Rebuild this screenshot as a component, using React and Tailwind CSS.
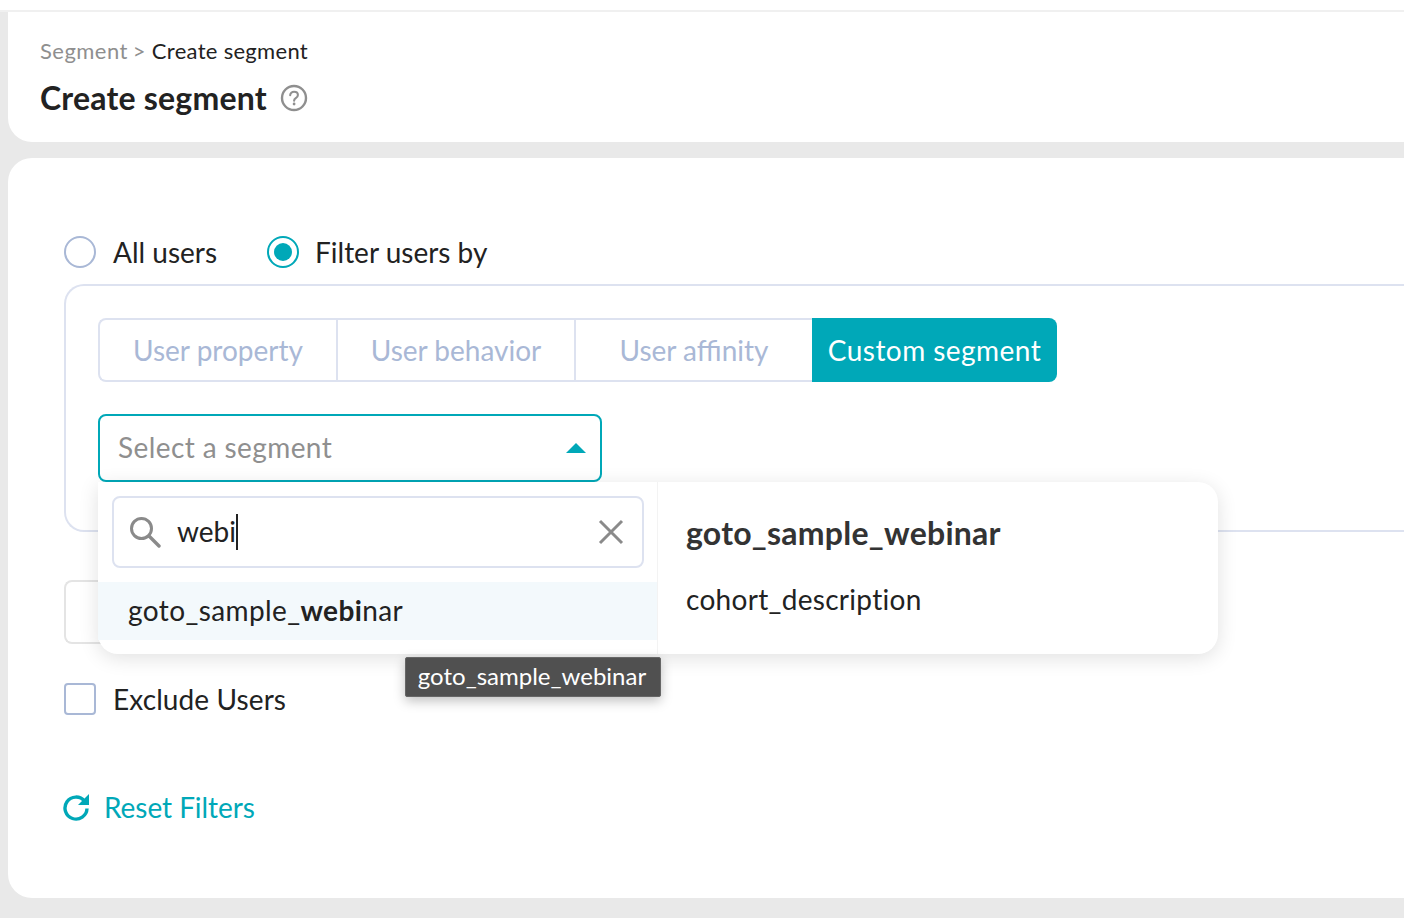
import React from "react";

function Tab({ children, className }) {
  return (
    <div className={`h-full flex items-center justify-center pb-[1px] text-[28px] text-[#a9b8d6] ${className}`}>
      {children}
    </div>
  );
}

export default function App() {
  return (
    <div className="relative h-[918px] w-[1404px] overflow-hidden bg-[#e9e9e9] font-['Lato',sans-serif] text-[#222]">
      <div className="h-[10px] bg-white" />
      <div className="h-[2px] bg-[#f0f0f0]" />
      <div className="pl-2">
        <div className="h-[130px] rounded-bl-[24px] bg-white pl-8 pt-[24px]">
          <div className="flex items-center h-[28px] text-[22px] tracking-[0.3px]">
            <span className="text-[#8f8f8f] tracking-[0.45px]">Segment</span>
            <span className="ml-[5px] text-[#8f8f8f]">&gt;</span>
            <span className="ml-[6px] text-[#222]">Create segment</span>
          </div>
          <div className="mt-[16px] flex items-center h-[36px]">
            <h1 className="text-[32px] font-bold tracking-[0.2px] text-[#222]">Create segment</h1>
            <svg className="ml-[13px]" width="28" height="28" viewBox="0 0 28 28" fill="none">
              <circle cx="14" cy="14" r="12" stroke="#8f8f8f" strokeWidth="2.4" />
              <path d="M10.2 11.3c0-2.2 1.7-3.6 3.9-3.6s3.8 1.3 3.8 3.3c0 1.6-.9 2.4-2.1 3.2-1 .7-1.7 1.3-1.7 2.6" stroke="#8f8f8f" strokeWidth="2.1" strokeLinecap="round" />
              <circle cx="14.1" cy="20" r="1.4" fill="#8f8f8f" />
            </svg>
          </div>
        </div>

        <div className="mt-4 h-[740px] rounded-l-[24px] bg-white pl-14 pt-[78px]">
          <div className="flex items-center h-[32px] text-[28px]">
            <span className="h-8 w-8 rounded-full border-2 border-[#a9b8d6]" />
            <span className="ml-[17px]">All users</span>
            <span className="ml-[50px] flex h-8 w-8 items-center justify-center rounded-full border-2 border-[#00a8b8]">
              <span className="h-[18px] w-[18px] rounded-full bg-[#00a8b8]" />
            </span>
            <span className="ml-[16px]">Filter users by</span>
          </div>

          <div className="mt-4 h-[248px] rounded-l-[20px] border-2 border-r-0 border-[#dde2f0] pl-8 pt-8">
            <div className="flex h-16 w-[959px]">
              <div className="flex h-full w-[714px] rounded-l-lg border-2 border-r-0 border-[#dde2f0]">
                <Tab className="w-[238px] border-r-2 border-[#dde2f0]">User property</Tab>
                <Tab className="w-[238px] border-r-2 border-[#dde2f0]">User behavior</Tab>
                <Tab className="flex-1">User affinity</Tab>
              </div>
              <div className="flex h-full flex-1 items-center justify-center rounded-r-lg bg-[#00a8b8] pb-[1px] text-[28px] tracking-[0.45px] text-white">
                Custom segment
              </div>
            </div>
            <div className="mt-8 flex h-[68px] w-[504px] items-center justify-between rounded-lg border-2 border-[#00a8b8] pl-[18px] pr-[14px] text-[28px] tracking-[0.4px] text-[#8f8f8f]">
              <span className="pb-[2px]">Select a segment</span>
              <svg width="20" height="12" viewBox="0 0 20 12"><path d="M10 1 L20 11 H0 Z" fill="#00a8b8" /></svg>
            </div>
          </div>

          <div className="mt-[48px] h-16 w-[200px] rounded-l-lg border-2 border-r-0 border-[#e4e4e4]" />

          <div className="mt-[39px] flex h-8 items-center text-[28px] tracking-[0.1px]">
            <span className="h-8 w-8 rounded-[4px] border-2 border-[#a9b8d6]" />
            <span className="ml-[17px]">Exclude Users</span>
          </div>

          <div className="mt-[76px] flex items-center h-8 -ml-[2px] text-[28px] text-[#00a8b8]">
            <svg width="28" height="28" viewBox="0 0 28 28" fill="none">
              <path d="M22.6 8.2A11 11 0 1 0 25 15.5" stroke="#00a8b8" strokeWidth="3.4" />
              <path d="M27 1v11H16z" fill="#00a8b8" />
            </svg>
            <span className="ml-[14px] tracking-[-0.05px]">Reset Filters</span>
          </div>
        </div>
      </div>

      {/* dropdown overlay */}
      <div className="absolute left-[98px] top-[482px] flex h-[172px] w-[1120px] rounded-b-[20px] rounded-tr-[20px] bg-white shadow-[0_4px_20px_rgba(0,0,0,0.12)]">
        <div className="flex h-full w-[560px] flex-col border-r border-[#f3f3f3] pt-[14px]">
          <div className="mx-[14px] flex h-[72px] w-[532px] items-center rounded-lg border-2 border-[#dde2f0] pl-[15px] pr-[18px]">
            <svg width="32" height="32" viewBox="0 0 32 32" fill="none">
              <circle cx="12.5" cy="12.5" r="10" stroke="#8a8a8a" strokeWidth="3" />
              <path d="M20 20l10 10" stroke="#8a8a8a" strokeWidth="3.4" strokeLinecap="round" />
            </svg>
            <span className="ml-[16px] pb-[2px] text-[28px]">webi</span>
            <span className="h-9 w-[2px] bg-[#222]" />
            <svg className="ml-auto" width="26" height="26" viewBox="0 0 26 26" fill="none">
              <path d="M2 2l22 22M24 2L2 24" stroke="#8a8a8a" strokeWidth="3" />
            </svg>
          </div>
          <div className="mt-[14px] flex h-[58px] items-center bg-[#f3f9fc] pb-[2px] pl-[30px] text-[28px] tracking-[0.4px]">
            goto_sample_<span className="font-bold">webi</span>nar
          </div>
        </div>
        <div className="flex-1 pl-[28px] pt-[29px]">
          <div className="h-[44px] text-[32px] font-bold leading-[44px] tracking-[0.25px] text-[#333]">goto_sample_webinar</div>
          <div className="mt-[23px] text-[28px] tracking-[0.3px]">cohort_description</div>
        </div>
      </div>

      <div className="absolute left-[405px] top-[657px] flex h-10 w-[256px] items-center justify-center rounded-[2px] border border-[#666] bg-[#505050] pb-[3px] pr-[2px] text-[24px] text-white shadow-[0_4px_12px_rgba(0,0,0,0.25)]">
        goto_sample_webinar
      </div>
    </div>
  );
}
